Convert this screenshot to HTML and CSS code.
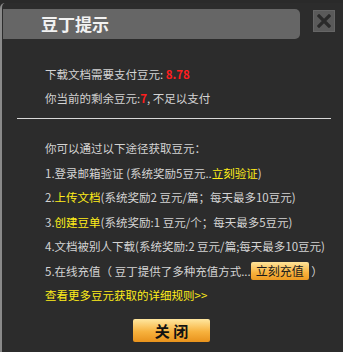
FILE: index.html
```html
<!DOCTYPE html>
<html lang="zh-CN">
<head>
    <meta charset="UTF-8">
    <title>豆丁提示</title>
    <link rel="stylesheet" href="styles.css">
</head>
<body>
    <div class="dialog">
        <div class="head">
            <div class="title-bar">豆丁提示</div>
            <a class="close-x" href="#">
                <svg width="14" height="14" viewBox="0 0 14 14">
                    <path d="M2 2 L12 12 M12 2 L2 12" stroke="#2a2a2a" stroke-width="3.2" stroke-linecap="square"/>
                </svg>
            </a>
        </div>

        <div class="info">
            <p class="row">下载文档需要支付豆元: <b class="red">8.78</b></p>
            <p class="row">你当前的剩余豆元:<b class="red">7</b>, 不足以支付</p>
        </div>

        <div class="sep"></div>

        <div class="ways">
            <p class="row">你可以通过以下途径获取豆元：</p>
            <p class="row">1.登录邮箱验证 (系统奖励5豆元..<a class="link" href="#">立刻验证</a>)</p>
            <p class="row">2.<a class="link" href="#">上传文档</a>(系统奖励2 豆元/篇；每天最多10豆元)</p>
            <p class="row">3.<a class="link" href="#">创建豆单</a>(系统奖励:1 豆元/个；每天最多5豆元)</p>
            <p class="row">4.文档被别人下载(系统奖励:2 豆元/篇;每天最多10豆元)</p>
            <p class="row">5.在线充值（ 豆丁提供了多种充值方式...<button class="btn-pay">立刻充值</button> ）</p>
            <p class="row"><a class="link" href="#">查看更多豆元获取的详细规则&gt;&gt;</a></p>
        </div>

        <div class="foot">
            <button class="btn-close">关 闭</button>
        </div>
    </div>
</body>
</html>
```

FILE: styles.css
```css
html, body {
    margin: 0;
    padding: 0;
    background-color: #2a2a2a;
}
body {
    width: 343px;
    height: 352px;
    overflow: hidden;
    font-family: "Noto Sans CJK SC", "Liberation Sans", sans-serif;
    font-size: 11.5px;
    color: #d4d4d4;
}
.dialog {
    margin-top: 3px;
    height: 349px;
    background-color: #2c2c2c;
    border-left: 2px solid #8a8a8a;
    border-top-left-radius: 5px;
    box-sizing: border-box;
}
.head {
    display: flex;
    align-items: flex-start;
    padding-top: 6px;
    padding-left: 1px;
}
.title-bar {
    width: 297px;
    height: 30px;
    line-height: 30px;
    padding-left: 38px;
    box-sizing: border-box;
    background-color: #666666;
    border-radius: 0 5px 5px 0;
    color: #f2f2f2;
    font-size: 17px;
    font-weight: bold;
}
.close-x {
    display: flex;
    align-items: center;
    justify-content: center;
    width: 22px;
    height: 22px;
    margin-top: 1px;
    margin-left: 13px;
    background-color: #5a5a5a;
    border: 1px solid #666;
    box-sizing: border-box;
}
.row {
    margin: 0;
    height: 24.5px;
    line-height: 24.5px;
    white-space: nowrap;
}
.info {
    margin-top: 23px;
    padding-left: 43px;
}
.info .row {
    height: 24px;
    line-height: 24px;
}
.red {
    color: #ff1e1e;
    font-weight: bold;
}
.sep {
    height: 1px;
    margin: 8px 12px 0 15px;
    background-color: #d8d8d8;
}
.ways {
    margin-top: 17px;
    padding-left: 43px;
}
.link {
    color: #ffee1a;
    text-decoration: none;
}
.btn-pay {
    display: inline-block;
    vertical-align: middle;
    width: 58px;
    height: 18px;
    padding: 0;
    margin-top: -3px;
    border: none;
    border-radius: 2px;
    background: linear-gradient(#ffe49a, #f7b13d 60%, #ec9a22);
    color: #1a1a1a;
    font-family: inherit;
    font-size: 12px;
    line-height: 18px;
}
.foot {
    display: flex;
    justify-content: center;
    margin-top: 11px;
    margin-left: -2px;
}
.btn-close {
    width: 77px;
    height: 23px;
    padding: 0;
    border: none;
    border-radius: 2px;
    background: linear-gradient(#ffe7a0, #f7b23e 55%, #e8921c);
    color: #111;
    font-family: inherit;
    font-size: 15px;
    font-weight: bold;
    line-height: 23px;
}
```
